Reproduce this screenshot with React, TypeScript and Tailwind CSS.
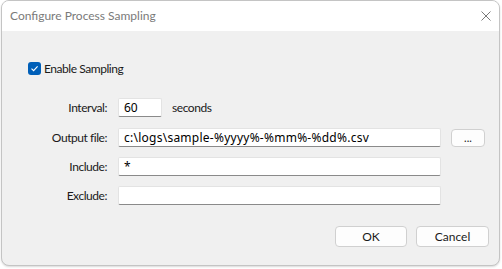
import React from "react";

const font = { fontFamily: 'Lato, "Noto Sans", sans-serif' };
const inputFont = { fontFamily: '"Noto Sans", sans-serif' };

function Field({ value, className }: { value: string; className: string }) {
  return (
    <div
      style={inputFont}
      className={`h-[19px] bg-white border border-[#e3e3e3] border-b-[#8a8a8a] rounded-[2px] pl-[5px] text-[12px] leading-[17px] text-black overflow-hidden whitespace-nowrap ${className}`}
    >
      {value}
    </div>
  );
}

export default function App() {
  return (
    <div className="w-[502px] h-[269px] bg-white" style={font}>
      <div className="ml-[1px] w-[499px] h-[266px] border border-[#c4c4c4] rounded-[8px] overflow-hidden flex flex-col bg-[#f0f0f0] shadow-[0_1px_2px_rgba(0,0,0,0.15)]">
        <div className="h-[30px] shrink-0 bg-white flex items-center justify-between pl-[8px] pr-[7px]">
          <span className="text-[12px] text-[#7a7a7a]">Configure Process Sampling</span>
          <svg width="10" height="10" viewBox="0 0 10 10" className="mr-[1px]">
            <path d="M0.5 0.5 L9.5 9.5 M9.5 0.5 L0.5 9.5" stroke="#7a7a7a" strokeWidth="1" />
          </svg>
        </div>
        <div className="flex-1 flex flex-col text-[12px] tracking-[-0.45px] text-[#1a1a1a]">
          <div className="flex items-center mt-[31px] ml-[26px] h-[13px]">
            <div className="w-[13px] h-[13px] rounded-[3px] bg-[#005fb8] flex items-center justify-center">
              <svg width="9" height="9" viewBox="0 0 9 9">
                <path d="M1.5 4.7 L3.6 6.7 L7.6 2.3" stroke="white" strokeWidth="1.1" fill="none" />
              </svg>
            </div>
            <span className="ml-[3px] leading-[13px]">Enable Sampling</span>
          </div>

          <div className="grid grid-cols-[105px_1fr] gap-x-[11px] mt-[23px] items-center">
            <span className="text-right leading-[19px]">Interval:</span>
            <div className="flex items-center">
              <Field value="60" className="w-[44px] tracking-normal" />
              <span className="ml-[10px]">seconds</span>
            </div>
          </div>

          <div className="grid grid-cols-[105px_1fr] gap-x-[11px] mt-[11px] items-center">
            <span className="text-right leading-[19px]">Output file:</span>
            <div className="flex items-center">
              <Field value="c:\logs\sample-%yyyy%-%mm%-%dd%.csv" className="w-[323px] tracking-[0.25px]" />
              <button className="ml-[10px] w-[34px] h-[18px] bg-[#fdfdfd] border border-[#d0d0d0] rounded-[4px] text-[11px] leading-[12px] text-[#222] tracking-normal">
                ...
              </button>
            </div>
          </div>

          <div className="grid grid-cols-[105px_1fr] gap-x-[11px] mt-[10px] items-center">
            <span className="text-right leading-[19px]">Include:</span>
            <Field value="*" className="w-[323px] tracking-normal" />
          </div>

          <div className="grid grid-cols-[105px_1fr] gap-x-[11px] mt-[10px] items-center">
            <span className="text-right leading-[19px]">Exclude:</span>
            <Field value="" className="w-[323px]" />
          </div>

          <div className="flex justify-end gap-[9px] mt-[21px] mr-[10px]">
            <button className="w-[72px] h-[21px] bg-[#fdfdfd] border border-[#d0d0d0] rounded-[4px] leading-[17px] tracking-normal">
              OK
            </button>
            <button className="w-[73px] h-[21px] bg-[#fdfdfd] border border-[#d0d0d0] rounded-[4px] leading-[17px] tracking-normal">
              Cancel
            </button>
          </div>
        </div>
      </div>
    </div>
  );
}
